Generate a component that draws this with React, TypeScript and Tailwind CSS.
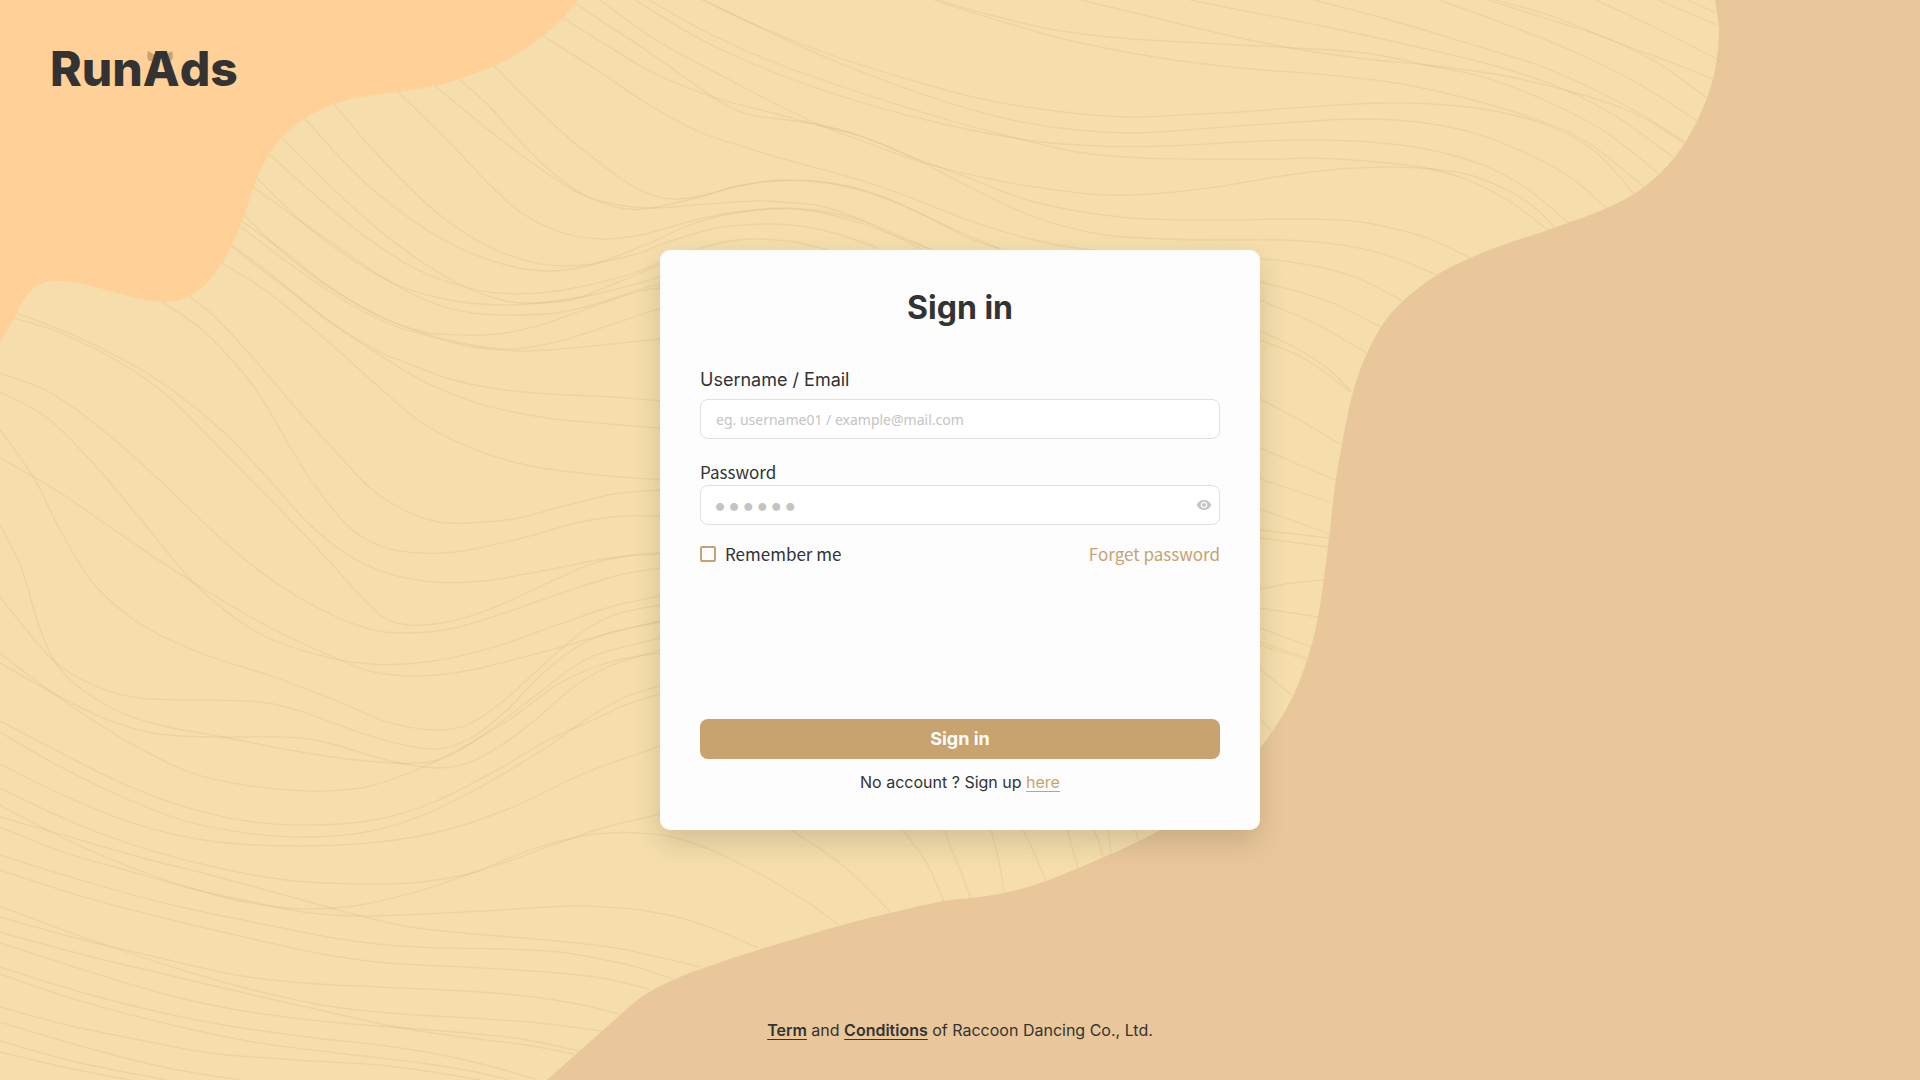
import { MdVisibility } from "react-icons/md";

type Point = [number, number];

const parse = (text: string): Point[] =>
  text
    .trim()
    .split(/\s+/)
    .map((pair) => pair.split(",").map(Number) as Point);

// Catmull-Rom spline through the points, as cubic Bezier segments.
const smooth = (text: string): string => {
  const p = parse(text);
  let d = `M${p[0][0]},${p[0][1]}`;
  for (let i = 0; i < p.length - 1; i++) {
    const a = p[i - 1] ?? p[i];
    const b = p[i];
    const c = p[i + 1];
    const e = p[i + 2] ?? c;
    d += `C${b[0] + (c[0] - a[0]) / 6},${b[1] + (c[1] - a[1]) / 6} ${c[0] - (e[0] - b[0]) / 6},${c[1] - (e[1] - b[1]) / 6} ${c[0]},${c[1]}`;
  }
  return d;
};

const orangeEdge =
  "578,0 563,18 543,36 519,53 494,66 459,79 435,86 398,92 367,96 334,104 304,119 282,138 267,158 256,180 250,198 243,219 232,245 222,263 208,282 189,296 175,301 162,302 139,299 110,291 82,284 58,281 43,283 31,291 22,303 14,318 0,343";

const tanEdge =
  "1715,0 1719,34 1713,79 1697,121 1674,158 1644,187 1607,208 1548,230 1509,243 1470,258 1437,275 1403,301 1381,327 1362,365 1351,400 1342,444 1335,486 1328,547 1318,617 1307,660 1293,696 1272,732 1240,770 1204,801 1160,830 1111,854 1046,881 1004,893 971,898 944,901 890,913 839,926 758,950 701,969 673,980 651,991 635,1002 601,1032 547,1080";

const contours = [
  "600,0 656,40 726,78 782,107 825,127 873,145 921,162 990,179 1042,188 1103,195 1164,193 1216,187 1240,183 1288,175 1340,169 1392,167 1431,169 1470,175 1509,191 1535,208 1554,227",
  "575,3 600,20 643,48 713,97 747,114 795,121 825,126 864,137 912,157 969,178 1034,202 1120,217 1198,220 1300,219 1353,221 1400,230 1435,241 1470,258",
  "563,18 600,41 652,72 713,97 773,113 825,127 860,136 912,157 969,187 1034,217 1099,234 1164,239 1240,240 1283,240 1335,244 1383,254 1437,275",
  "543,36 600,72 643,101 695,130 747,148 795,162 860,180 912,198 973,222 1034,240 1083,249 1160,256 1260,259 1309,265 1357,278 1403,301",
  "494,66 531,103 571,140 600,163 626,182 652,195 674,199 700,196 734,187 773,181 817,182 860,190 904,206 956,230 1000,249",
  "459,79 490,107 531,153 571,187 604,202 652,208 708,204 756,201 795,203 825,207 877,226 932,250",
  "435,86 490,131 531,162 571,189 600,202 626,209 652,208 700,197 743,185 786,180 825,182 873,193 917,212 969,238 1001,249",
  "398,92 449,142 490,185 522,213 563,233 604,239 640,235 656,231 708,217 752,210 786,208 821,211 860,220 895,236 921,249",
  "334,104 376,153 429,206 478,241 527,261 563,266 592,264 640,253 665,243 717,228 765,224 800,226 834,233 878,248",
  "305,119 359,177 408,217 457,247 506,265 547,271 588,266 643,246 687,226 730,214 773,209 812,211 860,223 930,249",
  "282,138 318,174 367,220 416,258 465,287 506,301 531,303 571,300 604,288 640,273 695,250 730,241 760,239 795,242 828,250",
  "269,154 318,198 367,238 416,269 461,286 498,293 539,293 580,287 640,271 665,258",
  "256,177 302,222 351,259 400,286 449,300 498,305 539,303 592,295 640,283 662,276",
  "253,187 302,222 351,256 392,283 433,303 473,313 514,315 555,313 596,304 640,289 662,284",
  "244,215 286,255 335,291 384,318 424,332 465,335 506,333 547,323 592,307 640,291 662,288",
  "242,221 286,253 327,285 376,315 420,332 461,343 502,349 531,347 571,338 640,315 662,308",
  "241,227 294,267 347,302 392,325 433,337 473,347 522,351 571,348 640,341 662,339",
  "232,245 282,283 327,320 375,352 425,382 484,405 547,418 610,424 660,428",
  "232,247 286,288 335,325 380,352 402,361 450,379 505,390 568,395 614,397 660,401",
  "222,263 269,293 318,333 349,360 379,387 421,422 471,448 526,465 589,474 660,480",
  "189,296 216,318 255,360 295,407 337,453 370,488 404,510 438,522 467,523 513,519 564,506 614,494 660,490",
  "162,302 200,328 232,360 261,397 290,447 316,487 349,527 383,547 421,553 463,551 522,538 581,522 623,516 660,516",
  "16,313 73,335 124,360 168,387 219,428 265,475 307,522 345,553 387,573 434,582 484,581 547,570 610,558 660,554",
  "14,318 61,333 116,360 164,393 210,438 261,490 316,547 358,593 383,617 408,625 442,623 488,610 539,587 589,565 631,555 660,553",
  "0,373 51,393 109,435 168,488 219,537 269,578 320,609 366,628 404,633 455,628 513,610 568,591 619,575 660,568",
  "0,392 46,417 93,463 143,522 194,583 253,630 311,653 370,664 434,661 497,646 560,624 610,607 660,596",
  "0,430 34,478 59,528 93,583 139,623 198,652 274,677 337,701 387,722 434,730 467,725 501,703 543,665 581,633 614,615 660,605",
  "0,458 59,492 126,538 194,583 269,627 345,662 379,673 421,676 471,670 547,651 610,633 660,622",
  "0,525 21,567 38,623 55,662 80,688 122,713 168,727 223,737 295,751 366,761 421,763 455,753 497,725 539,693 589,658 660,638",
  "0,597 25,628 55,662 93,685 139,698 202,700 261,702 303,712 358,732 404,745 438,749 471,738 505,712 539,677 572,650 606,634 660,621",
  "0,653 51,692 105,728 139,748 189,772 244,785 311,791 366,787 421,768 463,747 509,720 560,683 610,662 660,653",
  "0,663 51,692 101,717 152,733 210,737 278,737 320,741 379,758 404,764 438,768 467,763 497,748 535,720 572,688 610,666 660,650",
  "0,721 63,754 126,785 189,808 253,822 320,825 379,819 434,802 497,770 546,741 593,720 625,705 660,694",
  "0,732 55,764 118,795 185,821 253,834 307,837 366,832 421,816 484,785 547,747 585,720 625,697 660,686",
  "0,764 67,797 139,825 210,841 295,846 379,842 446,830 513,807 585,773 660,746",
  "0,788 63,818 130,844 210,866 286,880 362,884 421,882 476,872 539,850 573,838 606,827 660,814",
  "0,805 51,832 105,857 160,878 219,896 269,906 311,909 366,904 429,888 480,870 530,850 577,837 610,833 640,833 673,837 718,853 771,880 811,905 839,925",
  "0,817 63,835 139,857 210,875 295,898 349,913 404,926 463,933 547,940 610,947 640,953 701,967",
  "0,827 63,852 126,870 189,888 253,902 303,912 358,916 421,914 484,911 568,906 619,908 640,910 681,918 722,932 758,948",
  "0,855 84,881 168,904 253,922 328,937 387,945 446,948 505,949 560,952 610,961 640,968 673,979",
  "0,870 84,897 168,919 253,939 328,955 387,963 463,967 547,972 602,978 650,989",
  "0,906 63,930 126,952 189,972 253,990 328,1006 400,1014 471,1018 539,1023 601,1031",
  "0,917 76,938 160,958 236,975 303,983 379,987 463,991 526,996 577,1004 619,1014",
  "0,932 84,955 168,975 253,995 324,1011 391,1026 455,1036 526,1045 574,1054",
  "0,943 84,970 168,995 244,1011 320,1021 391,1027 455,1032 522,1039 579,1051",
  "0,967 84,993 168,1014 236,1027 316,1038 379,1045 442,1055 497,1068 537,1080",
  "0,974 84,1002 168,1024 253,1042 337,1053 421,1063 476,1072 509,1080",
  "0,1007 67,1025 135,1039 210,1053 295,1060 379,1065 438,1073 480,1080",
  "0,1022 84,1047 168,1068 240,1080",
  "0,1041 76,1062 166,1080",
  "0,1052 63,1067 130,1080",
  "791,830 836,860 869,890 890,912",
  "903,830 926,862 944,901",
  "944,830 958,865 971,898",
  "991,830 999,862 1004,892",
  "1023,830 1036,857 1046,881",
  "1067,830 1073,850 1078,869",
  "1094,830 1099,842 1103,858",
  "1108,830 1110,842 1111,854",
  "1135,830 1139,841",
  "649,0 708,33 773,62 852,90 938,117 1012,137 1077,152 1142,158 1198,159 1280,159 1309,158 1366,161 1426,168 1470,181 1509,201 1548,230",
  "635,0 700,39 773,72 860,102 947,125 1034,141 1099,146 1164,146 1240,142 1305,140 1370,142 1426,149 1483,165 1526,188 1569,223",
  "702,0 765,30 839,63 925,95 1003,118 1068,129 1133,133 1198,129 1240,126 1296,122 1361,119 1418,122 1474,133 1526,153 1570,177 1607,208",
  "704,0 765,29 834,56 904,78 982,99 1055,111 1129,117 1198,114 1240,112 1305,107 1383,103 1448,105 1500,112 1552,127 1596,152 1634,194",
  "934,0 990,18 1068,40 1155,57 1240,68 1318,74 1396,83 1465,98 1535,119 1587,142 1644,187",
  "938,0 990,15 1055,30 1120,38 1185,42 1240,45 1296,48 1366,53 1426,65 1483,77 1544,100 1604,131 1659,174",
  "1081,0 1164,20 1240,38 1296,49 1366,59 1426,65 1500,75 1565,90 1622,108 1656,125 1683,143",
  "1190,0 1240,10 1327,27 1413,46 1492,65 1561,88 1617,117 1674,158",
  "1314,0 1383,18 1457,40 1535,64 1587,86 1639,113 1685,142",
  "1439,0 1500,22 1570,50 1639,84 1697,121",
  "1489,0 1544,18 1604,37 1656,62 1707,98",
  "1496,0 1552,16 1613,41 1665,60 1713,79",
  "1596,0 1652,26 1717,59",
  "1658,0 1717,25",
  "1687,0 1717,13",
  "1260,282 1296,291 1335,304 1381,327",
  "1260,300 1314,323 1367,353",
  "1260,331 1296,348 1327,368 1351,391",
  "1260,340 1305,359 1351,392",
  "1260,399 1296,418 1340,444",
  "1260,448 1335,480",
  "1260,479 1332,503",
  "1260,509 1330,534",
  "1260,530 1329,538",
  "1260,538 1328,547",
  "1260,589 1292,583 1324,580",
  "1260,608 1318,617",
  "1260,628 1311,647",
  "1260,642 1307,658",
  "1260,645 1307,660",
  "1260,669 1293,696",
  "1260,719 1272,732",
];

function Backdrop() {
  return (
    <svg
      aria-hidden="true"
      className="absolute inset-0 h-full w-full"
      viewBox="0 0 1920 1080"
      preserveAspectRatio="xMidYMid slice"
    >
      <g fill="none" stroke="#dab980" strokeOpacity="0.3" strokeWidth="1.3">
        {contours.map((line) => (
          <path key={line} d={smooth(line)} />
        ))}
      </g>
      <path d={`${smooth(orangeEdge)}L0,0Z`} fill="#ffd098" />
      <path d={`${smooth(tanEdge)}L1920,1080L1920,0Z`} fill="#e9c79a" />
    </svg>
  );
}

function Logo() {
  return (
    <a href="#" className="inline-block text-5xl leading-none font-extrabold text-[#333333]">
      Run
      <span className="relative inline-block">
        <svg
          aria-hidden="true"
          className="absolute top-1.5 left-1 -z-10 h-3 w-[26px]"
          viewBox="0 0 26 12"
          fill="#c8a26f"
        >
          <path d="M1 0Q-0.500 5 1 8.500Q2.500 11 6 9.500L10 7V4Q5 3 1 0Z" />
          <path d="M25 0Q26.500 5 25 8.500Q23.500 11 20 9.500L16 7V4Q21 3 25 0Z" />
        </svg>
        A
      </span>
      ds
    </a>
  );
}

export default function App() {
  return (
    <div className="relative isolate grid min-h-screen grid-rows-[1fr_auto_1fr] overflow-hidden bg-[#f5deac] font-['Inter',sans-serif] text-[#333333]">
      <Backdrop />

      <header className="relative isolate px-[50px] py-[45px]">
        <Logo />
      </header>

      <main className="relative flex justify-center">
        <form
          onSubmit={(e) => e.preventDefault()}
          className="flex w-full max-w-[600px] flex-col rounded-[10px] bg-[#fdfdfd] px-10 pt-9 pb-9 shadow-[0_12px_28px_rgba(0,0,0,0.14)]"
        >
          <h1 className="text-center text-[32px] leading-[44px] font-bold">Sign in</h1>

          <label htmlFor="username" className="mt-9 text-lg leading-7">
            Username / Email
          </label>
          <input
            id="username"
            type="text"
            placeholder="eg. username01 / example@mail.com"
            className="mt-[5px] h-10 rounded-lg border border-[#e0e0e0] bg-white px-[15px] font-['Noto_Sans',sans-serif] text-sm outline-none placeholder:text-[#c4c4c4]"
          />

          <label
            htmlFor="password"
            className="mt-5 font-['Noto_Sans_CJK_SC',sans-serif] text-[17px] leading-[26px]"
          >
            Password
          </label>
          <div className="flex h-10 items-center rounded-lg border border-[#e0e0e0] bg-white pr-[7px] pl-3">
            <input
              id="password"
              type="password"
              defaultValue="123456"
              className="h-full min-w-0 flex-1 bg-transparent text-[25px] text-[#c4c4c4] outline-none"
            />
            <button type="button" aria-label="Show password" className="text-[#c4c4c4]">
              <MdVisibility size={16} />
            </button>
          </div>

          <div className="mt-4 flex items-center justify-between font-['Noto_Sans_CJK_SC',sans-serif] text-[17px] leading-[26px]">
            <label className="flex items-center gap-[9px]">
              <input
                type="checkbox"
                className="size-4 appearance-none rounded-[2px] border-2 border-[#c8a26f] checked:bg-[#c8a26f]"
              />
              Remember me
            </label>
            <a href="#" className="text-[#c8a26f]">
              Forget password
            </a>
          </div>

          <button
            type="submit"
            className="mt-[152px] h-10 rounded-lg bg-[#c8a26f] text-lg font-bold text-[#fdfdfd]"
          >
            Sign in
          </button>

          <p className="mt-[11px] text-center text-base leading-6">
            No account ? Sign up{" "}
            <a href="#" className="text-[#c8a26f] underline underline-offset-[3px]">
              here
            </a>
          </p>
        </form>
      </main>

      <footer className="relative flex items-end justify-center pb-[38px] text-base leading-6">
        <p>
          <a href="#" className="font-semibold underline underline-offset-[3px]">
            Term
          </a>{" "}
          and{" "}
          <a href="#" className="font-semibold underline underline-offset-[3px]">
            Conditions
          </a>{" "}
          of Raccoon Dancing Co., Ltd.
        </p>
      </footer>
    </div>
  );
}
